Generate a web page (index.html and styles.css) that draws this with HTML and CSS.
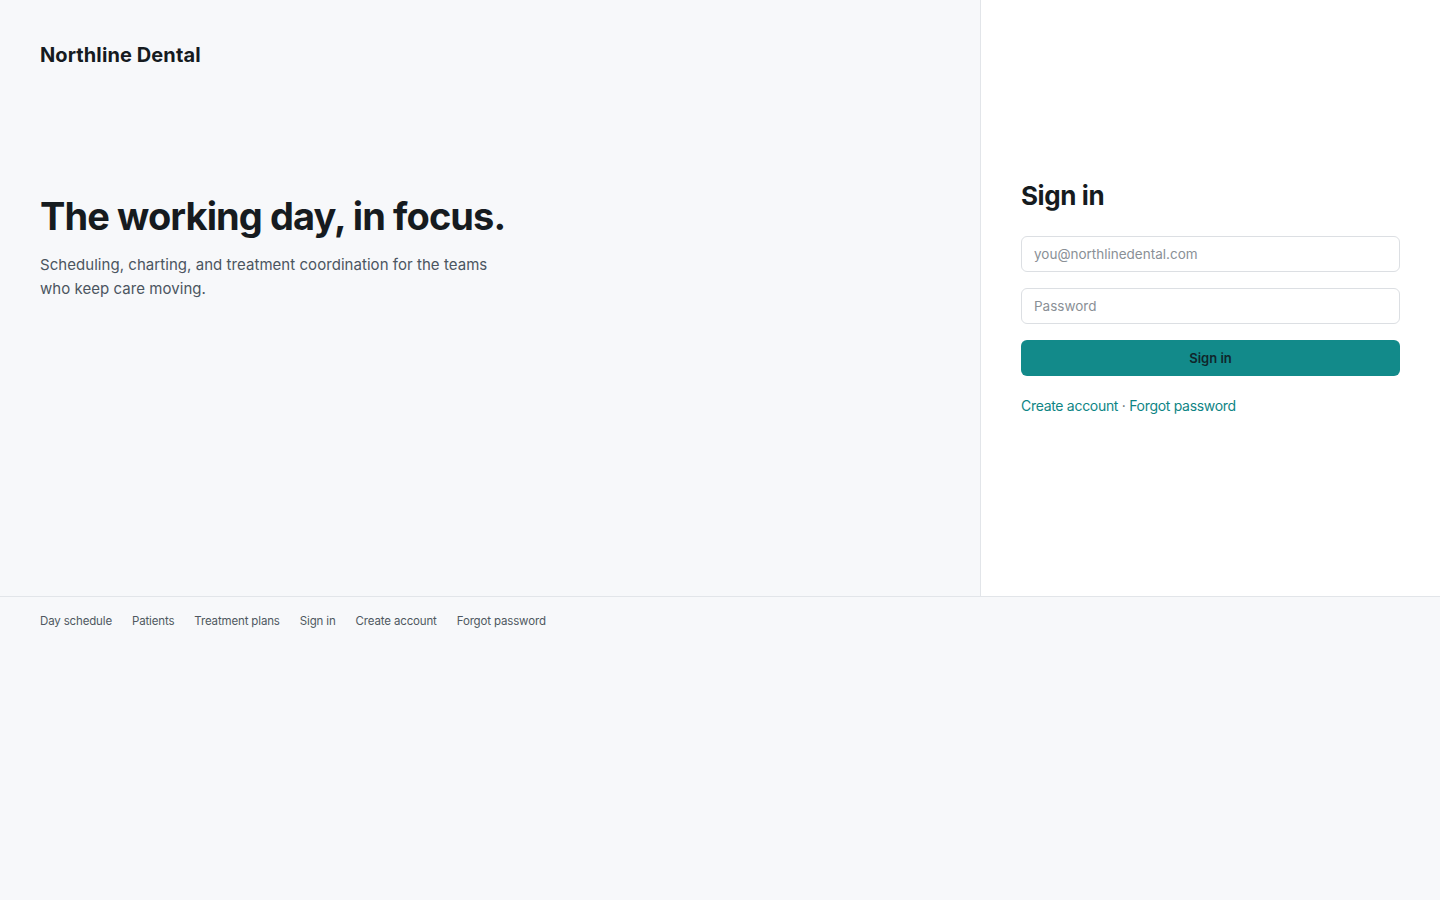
FILE: index.html
```html
<!DOCTYPE html>
<html lang="en">
<head>
<meta charset="utf-8">
<title>Northline Dental — Sign in</title>
<link rel="stylesheet" href="styles.css">
</head>
<body>
<div class="shell">
  <section class="intro">
    <div class="brand">Northline Dental</div>
    <div class="hero">
      <h1>The working day, in focus.</h1>
      <p>Scheduling, charting, and treatment coordination for the teams who keep care moving.</p>
    </div>
  </section>
  <section class="auth">
    <form class="form">
      <h2>Sign in</h2>
      <input class="field" type="email" placeholder="you@northlinedental.com">
      <input class="field" type="password" placeholder="Password">
      <button class="btn" type="button">Sign in</button>
      <div class="links"><a href="#">Create account</a> · <a href="#">Forgot password</a></div>
    </form>
  </section>
</div>
<footer class="foot">
  <a href="#">Day schedule</a>
  <a href="#">Patients</a>
  <a href="#">Treatment plans</a>
  <a href="#">Sign in</a>
  <a href="#">Create account</a>
  <a href="#">Forgot password</a>
</footer>
</body>
</html>
```
FILE: styles.css
```css
* { box-sizing: border-box; }
html, body { margin: 0; padding: 0; }
body {
  font-family: Inter, "Noto Sans", sans-serif;
  background: #f7f8fa;
  color: #161b1f;
  min-height: 900px;
}
.shell {
  display: grid;
  grid-template-columns: 980px 1fr;
  height: 597px;
  border-bottom: 1px solid #e2e5e9;
}
.intro {
  padding: 40px 40px;
  display: flex;
  flex-direction: column;
}
.brand {
  font-size: 20px;
  font-weight: 700;
  line-height: 28px;
  letter-spacing: 0.1px;
  margin-top: 1px;
}
.hero { margin-top: 123px; }
.hero h1 {
  margin: 0;
  font-size: 38px;
  line-height: 48px;
  font-weight: 700;
  letter-spacing: -0.9px;
}
.hero p {
  margin: 13px 0 0;
  max-width: 470px;
  font-size: 15px;
  line-height: 24px;
  color: #4b5560;
  letter-spacing: 0.05px;
}
.auth {
  background: #fff;
  border-left: 1px solid #e2e5e9;
  padding: 0 40px;
  display: flex;
  align-items: center;
}
.form {
  width: 100%;
  display: flex;
  flex-direction: column;
  gap: 16px;
}
.form h2 {
  margin: 0 0 8px;
  font-size: 26px;
  line-height: 32px;
  font-weight: 700;
  letter-spacing: -0.4px;
}
.field {
  height: 36px;
  border: 1px solid #dcdfe3;
  border-radius: 6px;
  background: #fff;
  padding: 0 12px;
  font-family: inherit;
  font-size: 13.5px;
  color: #161b1f;
}
.field::placeholder { color: #8a9096; }
.btn {
  height: 36px;
  border: 0;
  border-radius: 6px;
  background: #128a8a;
  color: #10252a;
  font-family: inherit;
  font-size: 13px;
  font-weight: 600;
}
.links {
  margin-top: 4px;
  font-size: 14px;
  line-height: 20px;
  letter-spacing: -0.3px;
  color: #5a6a6e;
}
.links a { color: #0f8585; text-decoration: none; }
.foot {
  display: flex;
  gap: 20px;
  padding: 15px 40px;
}
.foot a {
  font-size: 11.5px;
  line-height: 18px;
  letter-spacing: -0.15px;
  color: #4f5861;
  text-decoration: none;
}
```
